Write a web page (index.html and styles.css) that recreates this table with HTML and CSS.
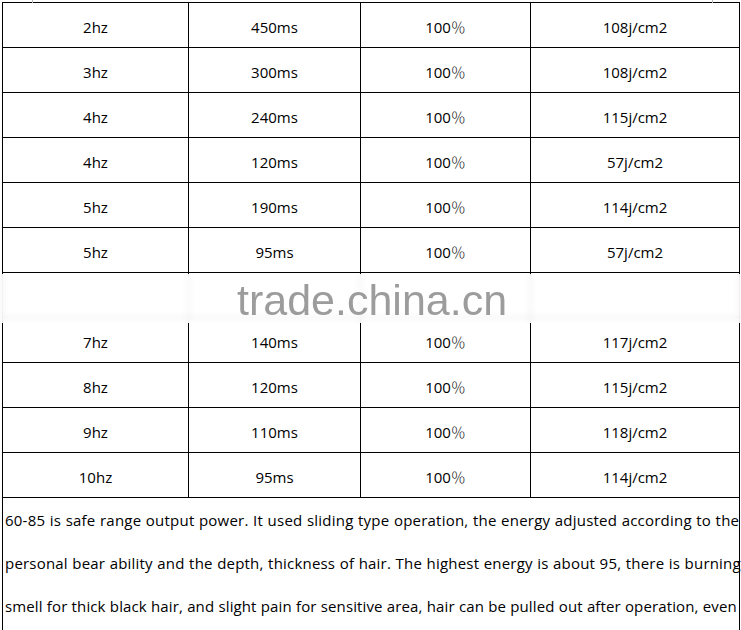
FILE: index.html
```html
<!DOCTYPE html>
<html lang="en">
<head>
<meta charset="utf-8">
<title>Parameters</title>
<link rel="stylesheet" href="styles.css">
</head>
<body>
<div class="page">
  <span class="tick tick-left"></span>
  <span class="tick tick-right"></span>
  <table class="spec">
    <colgroup>
      <col class="c1"><col class="c2"><col class="c3"><col class="c4">
    </colgroup>
    <tbody>
      <tr><td>2hz</td><td>450ms</td><td>100<span class="pct">％</span></td><td>108j/cm2</td></tr>
      <tr><td>3hz</td><td>300ms</td><td>100<span class="pct">％</span></td><td>108j/cm2</td></tr>
      <tr><td>4hz</td><td>240ms</td><td>100<span class="pct">％</span></td><td>115j/cm2</td></tr>
      <tr><td>4hz</td><td>120ms</td><td>100<span class="pct">％</span></td><td>57j/cm2</td></tr>
      <tr><td>5hz</td><td>190ms</td><td>100<span class="pct">％</span></td><td>114j/cm2</td></tr>
      <tr><td>5hz</td><td>95ms</td><td>100<span class="pct">％</span></td><td>57j/cm2</td></tr>
      <tr class="hidden-row"><td></td><td></td><td></td><td></td></tr>
      <tr><td>7hz</td><td>140ms</td><td>100<span class="pct">％</span></td><td>117j/cm2</td></tr>
      <tr><td>8hz</td><td>120ms</td><td>100<span class="pct">％</span></td><td>115j/cm2</td></tr>
      <tr><td>9hz</td><td>110ms</td><td>100<span class="pct">％</span></td><td>118j/cm2</td></tr>
      <tr><td>10hz</td><td>95ms</td><td>100<span class="pct">％</span></td><td>114j/cm2</td></tr>
      <tr class="note-row">
        <td colspan="4" class="note">
          <div class="line l1">60-85 is safe range output power. It used sliding type operation, the energy adjusted according to the</div>
          <div class="line l2">personal bear ability and the depth, thickness of hair. The highest energy is about 95, there is burning</div>
          <div class="line l3">smell for thick black hair, and slight pain for sensitive area, hair can be pulled out after operation, even</div>
        </td>
      </tr>
    </tbody>
  </table>
  <div class="watermark"><span class="wm-text">trade.china.cn</span></div>
</div>
</body>
</html>
```

FILE: styles.css
```css
html, body {
  margin: 0;
  padding: 0;
  background: #fff;
}
body {
  width: 741px;
  height: 630px;
  overflow: hidden;
}
.page {
  position: relative;
  width: 741px;
  height: 630px;
  overflow: hidden;
  padding-top: 2px;
  box-sizing: border-box;
}
.tick {
  position: absolute;
  top: 0;
  width: 1px;
  height: 3px;
  background: #b8b8b8;
}
.tick-left { left: 32px; }
.tick-right { left: 712px; }

.spec {
  margin-left: 2px;
  width: 737px;
  table-layout: fixed;
  border-collapse: collapse;
  font-family: "Open Sans", Lato, "Liberation Sans", sans-serif;
  font-size: 15px;
  color: #000;
}
.c1 { width: 186px; }
.c2 { width: 172px; }
.c3 { width: 170px; }
.c4 { width: 209px; }

.spec td {
  border: 1px solid #000;
  height: 45px;
  padding: 3px 0 0;
  box-sizing: border-box;
  text-align: center;
  vertical-align: middle;
  line-height: 40px;
  white-space: nowrap;
}
.pct {
  font-family: "Noto Sans CJK SC", sans-serif;
  font-size: 15px;
  font-weight: 300;
  color: #111;
}
.spec td.note {
  text-align: left;
  vertical-align: top;
  padding: 1px 0 0 2px;
  height: 140px;
  overflow: visible;
}
.line {
  line-height: 43px;
  white-space: nowrap;
  letter-spacing: 0.22px;
  word-spacing: 0.4px;
}
.line.l2 {
  letter-spacing: 0.2px;
}
.line.l3 {
  letter-spacing: 0.12px;
  word-spacing: 0.2px;
}

.watermark {
  position: absolute;
  left: 0;
  top: 274px;
  width: 741px;
  height: 49px;
  background: rgba(255, 255, 255, 0.86);
  backdrop-filter: blur(3px);
  display: flex;
  align-items: flex-start;
}
.wm-text {
  margin-left: 237px;
  margin-top: 2px;
  font-family: "Liberation Sans", Arial, sans-serif;
  font-size: 43px;
  line-height: 48px;
  color: #9c9c9c;
  letter-spacing: 0;
}
```
